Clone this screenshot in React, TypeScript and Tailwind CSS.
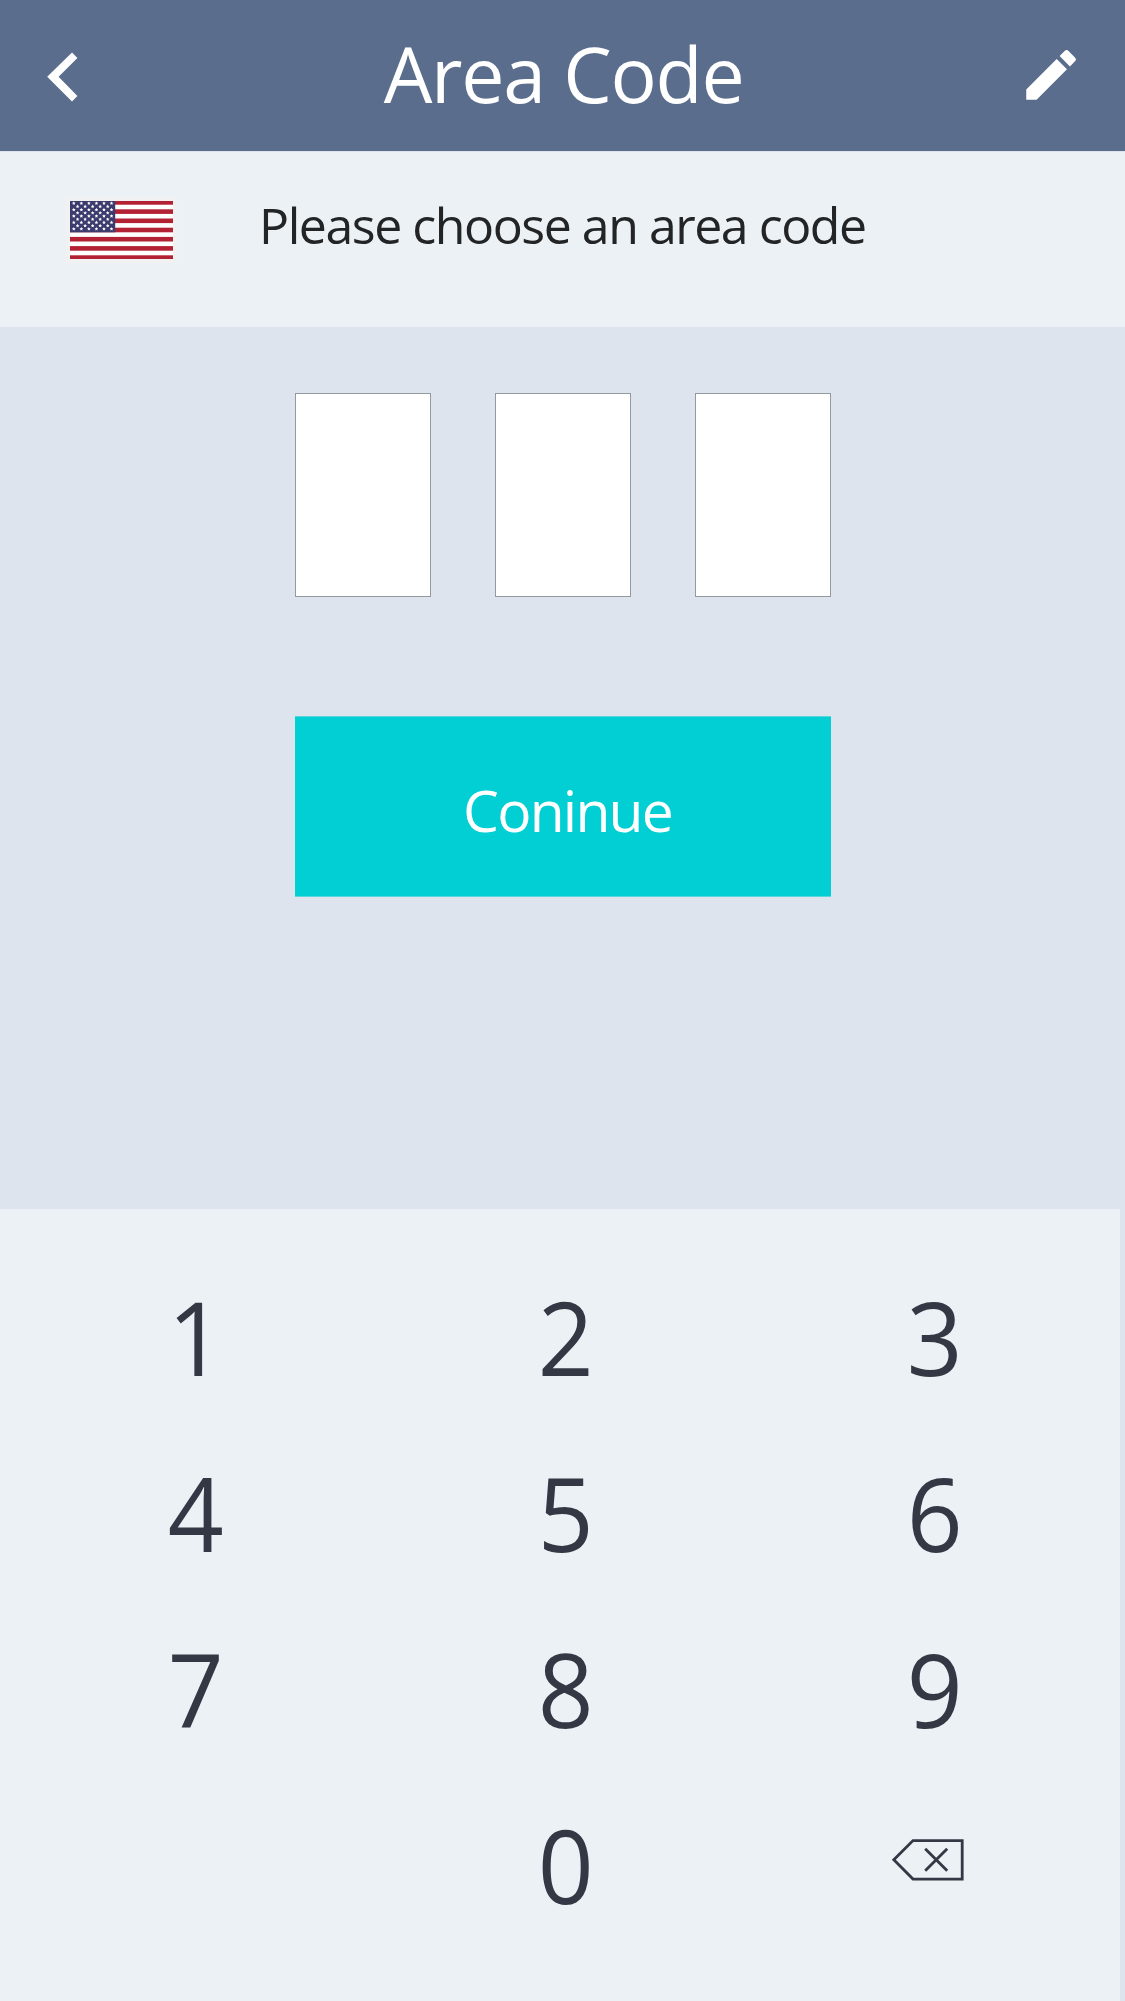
import { MdEdit } from "react-icons/md";

function starPoints(cx: number, cy: number, r: number) {
  return Array.from({ length: 10 }, (_, i) => {
    const radius = i % 2 === 0 ? r : r * 0.5;
    const a = -Math.PI / 2 + (i * Math.PI) / 5;
    return `${(cx + radius * Math.cos(a)).toFixed(2)},${(cy + radius * Math.sin(a)).toFixed(2)}`;
  }).join(" ");
}

function Flag() {
  const stars: [number, number][] = [];
  for (let row = 0; row < 9; row++) {
    const odd = row % 2 === 1;
    for (let col = 0; col < (odd ? 5 : 6); col++) {
      stars.push([3.8 + (odd ? 3.77 : 0) + col * 7.54, 2.3 + row * 3.2]);
    }
  }
  return (
    <div className="h-[66px] w-[111px] shrink-0 bg-[#f1f1f2] p-1">
      <svg width="103.3" height="58" viewBox="0 0 103.3 58" aria-label="United States">
        <rect width="103.3" height="58" fill="#fff" />
        {[0, 1, 2, 3, 4, 5, 6].map((i) => (
          <rect key={i} y={-0.9 + i * 9.2} width="103.3" height="4.6" fill="#b22234" />
        ))}
        <rect width="45.2" height="31.3" fill="#3c3b6e" />
        {stars.map(([x, y], i) => (
          <polygon key={i} points={starPoints(x, y, 1.9)} fill="#fff" />
        ))}
      </svg>
    </div>
  );
}

function BackIcon() {
  return (
    <svg width="32" height="50" viewBox="0 0 32 50" fill="#fff">
      <path d="M25 .6 30.4 6 11.6 24.8 30.4 44.1 25 49.5.2 24.8z" />
    </svg>
  );
}

function DeleteIcon() {
  return (
    <svg width="74" height="44" viewBox="0 0 74 44" fill="none" stroke="#343845" strokeWidth="2.8">
      <path d="M2.8 21.8 22 2.6h49.2v38.5H22z" />
      <path d="m34.2 10.8 22 22m0-22-22 22" />
    </svg>
  );
}

const keys = ["1", "2", "3", "4", "5", "6", "7", "8", "9", "", "0", "del"];

export default function App() {
  return (
    <div className="flex h-[2001px] w-[1125px] flex-col overflow-hidden bg-[#dde4ee] font-['Open_Sans','Noto_Sans',sans-serif]">
      <header className="flex h-[151px] shrink-0 items-center justify-between bg-[#5b6d8d] pr-[41px] pl-[47px] text-white">
        <button className="w-[60px] pt-[2px]" aria-label="Back">
          <BackIcon />
        </button>
        <h1 className="pb-[5px] pl-[2px] text-[77px] leading-none tracking-[-1.3px]">Area Code</h1>
        <button className="pb-[2px]" aria-label="Edit">
          <MdEdit size={66} />
        </button>
      </header>

      <section className="mt-px flex h-[175px] shrink-0 items-start bg-[#ebf1f5] pt-[45px] pl-[66px]">
        <Flag />
        <p className="-mt-[5px] ml-[82px] text-[50px] leading-[66px] font-normal tracking-[-1.45px] whitespace-nowrap text-[#222426]">
          Please choose an area code
        </p>
      </section>

      <main className="flex flex-1 flex-col items-center pt-[66px]">
        <div className="flex gap-16 pl-px">
          {[0, 1, 2].map((i) => (
            <div key={i} className="h-[204px] w-[136px] border border-[#939a9f] bg-white" />
          ))}
        </div>
        <button className="mt-[119px] ml-px h-[181px] w-[536px] border-y border-[#58d6dc] bg-[#01cfd3] pt-[7px] pl-[9px] text-[57px] leading-none tracking-[-1.8px] text-white">
          Coninue
        </button>
      </main>

      <footer className="grid h-[792px] w-[1120px] shrink-0 auto-rows-[176px] grid-cols-3 bg-[#ebf1f5] pt-[39px] pl-[11px] text-[103px] leading-[176px] text-[#343845]">
        {keys.map((k, i) =>
          k === "" ? (
            <span key={i} />
          ) : k === "del" ? (
            <button key={i} aria-label="Delete" className="flex justify-center pt-[62px] pr-[15px]">
              <DeleteIcon />
            </button>
          ) : (
            <button key={i} className="scale-x-95">
              {k}
            </button>
          ),
        )}
      </footer>
    </div>
  );
}
